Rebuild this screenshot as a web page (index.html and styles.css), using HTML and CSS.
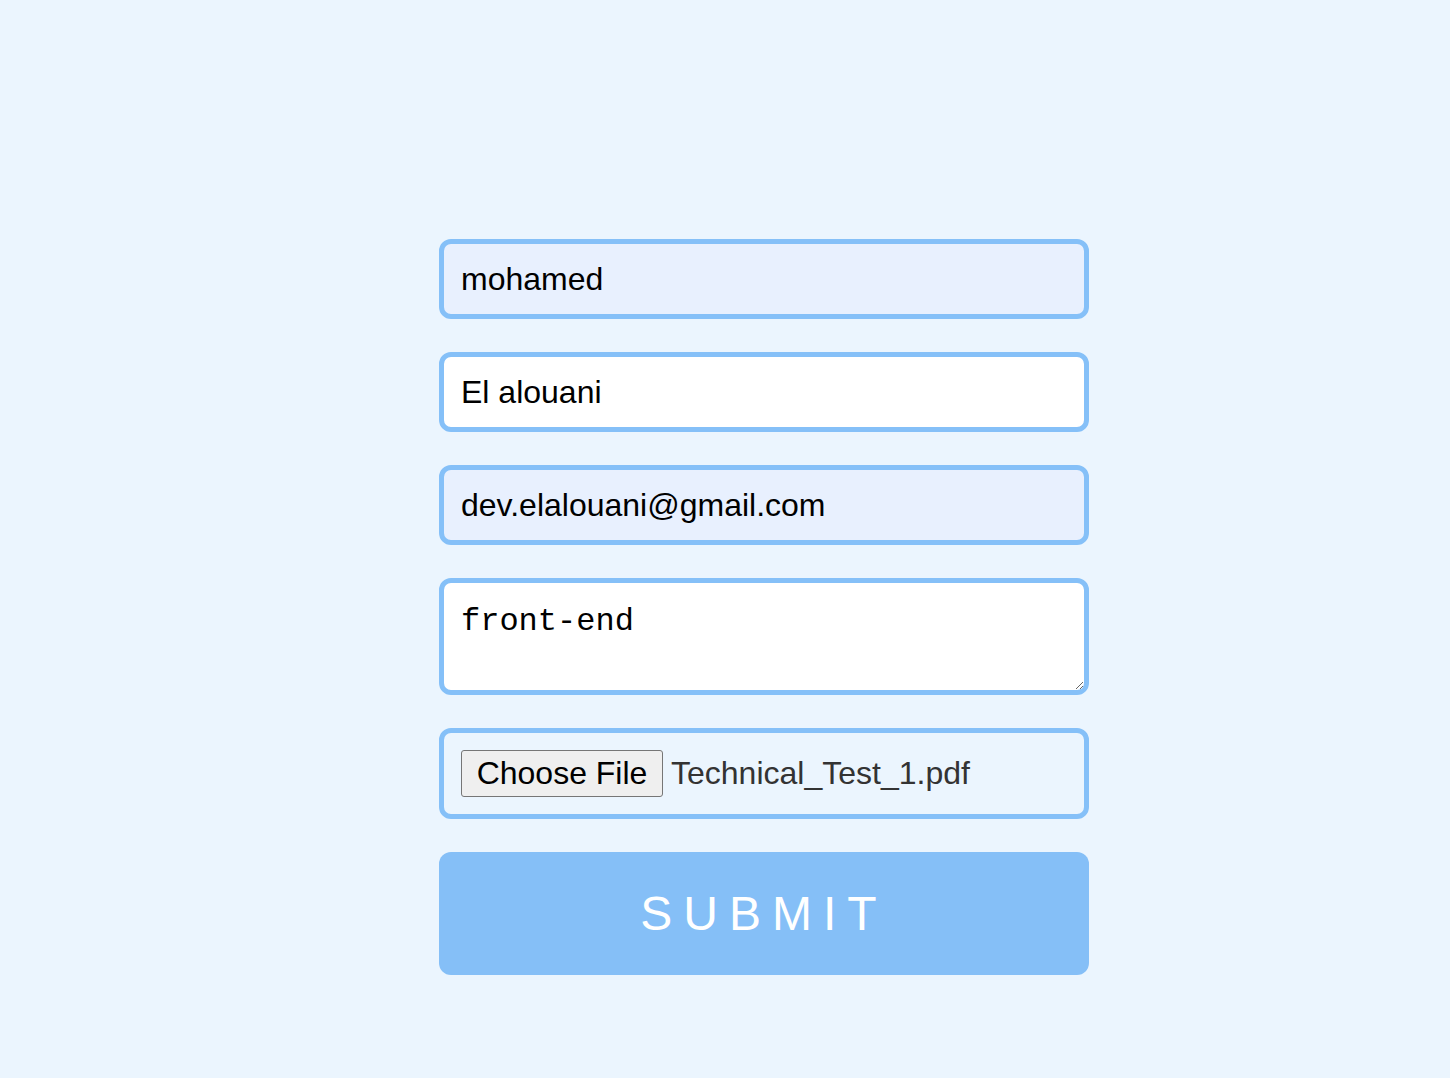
FILE: index.html
```html
<!DOCTYPE html>
<html lang="en">
<head>
<meta charset="utf-8">
<title>Form</title>
<link rel="stylesheet" href="styles.css">
</head>
<body>
<main class="page">
  <form class="form">
    <input class="field field-auto" type="text" value="mohamed">
    <input class="field" type="text" value="El alouani">
    <input class="field field-auto" type="email" value="dev.elalouani@gmail.com">
    <textarea class="field area">front-end</textarea>
    <div class="field file">
      <span class="file-btn">Choose File</span>
      <span class="file-name">Technical_Test_1.pdf</span>
    </div>
    <button class="submit" type="button">SUBMIT</button>
  </form>
</main>
</body>
</html>
```

FILE: styles.css
```css
html, body {
  margin: 0;
  padding: 0;
  background: #ebf5fe;
}
.page {
  min-height: 1078px;
  box-sizing: border-box;
  padding: 239px 0 0 439px;
}
.form {
  width: 650px;
  display: flex;
  flex-direction: column;
  gap: 33px;
}
.field {
  box-sizing: border-box;
  width: 650px;
  height: 80px;
  margin: 0;
  border: 5px solid #85c0f8;
  border-radius: 12px;
  padding: 0 17px;
  background: #ffffff;
  font-family: "Liberation Sans", Arial, sans-serif;
  font-size: 32px;
  color: #000;
  outline: none;
}
.field-auto {
  background: #e8f0fe;
}
.area {
  height: 117px;
  padding: 21px 17px 17px;
  font-family: "Liberation Mono", "Courier New", monospace;
  font-size: 32px;
  line-height: 36px;
  resize: vertical;
  display: block;
}
.file {
  height: 91px;
  background: transparent;
  display: flex;
  align-items: center;
  padding: 0 17px;
}
.file-btn {
  box-sizing: border-box;
  height: 47px;
  width: 202px;
  display: flex;
  align-items: center;
  justify-content: center;
  border: 1px solid #767676;
  border-radius: 3px;
  background: #efefef;
  color: #000;
  font-size: 32px;
}
.file-name {
  margin-left: 8px;
  color: #333;
  font-size: 32px;
}
.submit {
  width: 650px;
  height: 123px;
  margin: 0;
  border: none;
  border-radius: 12px;
  background: #85bff7;
  color: #fff;
  font-family: "Liberation Sans", Arial, sans-serif;
  font-size: 48px;
  letter-spacing: 11px;
  padding: 0;
  cursor: pointer;
}
```
